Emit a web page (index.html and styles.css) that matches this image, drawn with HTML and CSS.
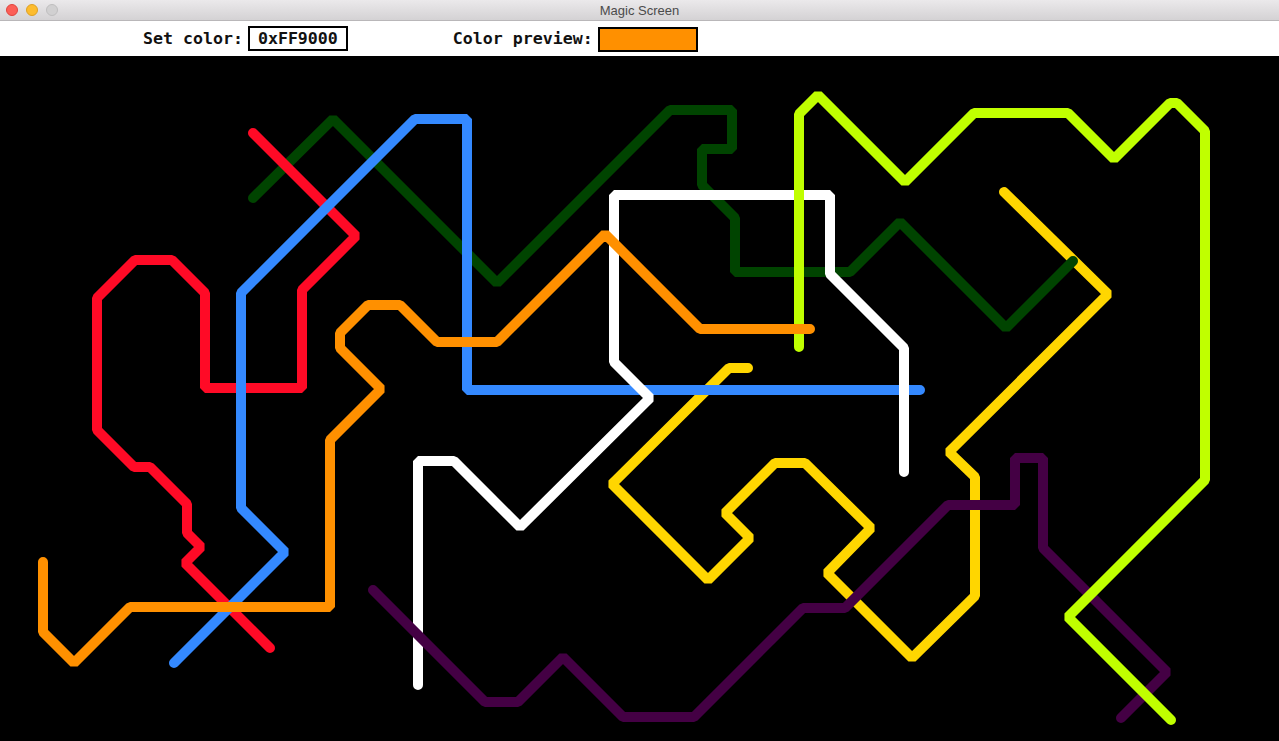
FILE: index.html
```html
<!DOCTYPE html>
<html>
<head>
<meta charset="utf-8">
<title>Magic Screen</title>
<link rel="stylesheet" href="styles.css">
</head>
<body>
<div class="window">
  <div class="titlebar">
    <div class="lights">
      <span class="light close"></span>
      <span class="light min"></span>
      <span class="light zoom"></span>
    </div>
    <div class="title">Magic Screen</div>
    <div></div>
  </div>
  <div class="toolbar">
    <div class="field">
      <span class="label">Set color:</span>
      <span class="input">0xFF9000</span>
    </div>
    <div class="field preview">
      <span class="label">Color preview:</span>
      <span class="swatch"></span>
    </div>
  </div>
  <div class="canvas">
    <svg class="board" width="1279" height="685" viewBox="0 56 1279 685" xmlns="http://www.w3.org/2000/svg">
      <polyline class="stroke yellow" points="748,368 729,368 612,484 708,580 750,538 725,513 775,463 805,463 871,528 827,573 912,658 975,596 975,477 949,452 1108,294 1004,192"/>
      <polyline class="stroke green" points="253,198 333,119 497,283 670,110 732,110 732,149 702,149 702,185 735,218 735,272 850,272 900,222 1006,328 1073,261"/>
      <polyline class="stroke red" points="253,133 356,236 302,290 302,388 205,388 205,293 172,260 135,260 97,298 97,430 134,467 150,467 187,504 187,533 201,547 185,563 270,648"/>
      <polyline class="stroke blue" points="174,663 285,552 241,508 241,293 415,119 467,119 467,390 920,390"/>
      <polyline class="stroke white" points="418,685 418,461 454,461 520,527 650,398 614,362 614,195 830,195 830,274 904,348 904,472"/>
      <polyline class="stroke purple" points="373,590 485,702 518,702 563,657 623,717 694,717 803,608 845,608 948,505 1015,505 1015,458 1043,458 1043,548 1167,672 1121,718"/>
      <polyline class="stroke lime" points="799,347 799,114 818,95 905,182 974,113 1068,113 1114,159 1170,103 1177,103 1205,131 1205,480 1068,617 1171,720"/>
      <polyline class="stroke orange" points="43,562 43,632 74,663 130,607 330,607 330,440 381,389 340,348 340,333 368,305 400,305 437,342 497,342 605,234 700,329 810,329"/>
    </svg>
  </div>
</div>
</body>
</html>
```
FILE: styles.css
```css
* { box-sizing: border-box; }

html, body {
  margin: 0;
  padding: 0;
  background: #000;
  overflow: hidden;
}

.window {
  width: 1279px;
  height: 741px;
  display: flex;
  flex-direction: column;
}

.titlebar {
  height: 21px;
  display: grid;
  grid-template-columns: 1fr auto 1fr;
  align-items: center;
  background: linear-gradient(#ebe9eb, #d4d2d4);
  border-bottom: 1px solid #b9b7b9;
}

.lights {
  display: flex;
  gap: 8px;
  padding-left: 6px;
}

.light {
  width: 12px;
  height: 12px;
  border-radius: 50%;
  display: block;
}

.close { background: #fc5f57; border: 1px solid #e0443e; }
.min { background: #fdbc2e; border: 1px solid #dea123; }
.zoom { background: #d1d0d1; border: 1px solid #bfbebf; }

.title {
  font-family: "Liberation Sans", Arial, sans-serif;
  font-size: 13px;
  color: #4b4b4b;
}

.toolbar {
  height: 35px;
  background: #fff;
  display: flex;
  align-items: center;
  padding-left: 143px;
  gap: 105px;
  font-family: "DejaVu Sans Mono", "Liberation Mono", monospace;
  font-weight: bold;
  font-size: 16.6px;
  color: #111;
}

.field {
  display: flex;
  align-items: center;
  gap: 5px;
}

.input {
  display: block;
  height: 25px;
  line-height: 21px;
  padding: 0 8px;
  border: 2px solid #000;
  margin-top: -1px;
}

.swatch {
  display: block;
  width: 100px;
  height: 25px;
  background: #ff9000;
  border: 2px solid #000;
  margin-top: 1px;
}

.canvas {
  flex: 1;
  background: #000;
}

.board { display: block; }

.stroke {
  fill: none;
  stroke-width: 10;
  stroke-linejoin: bevel;
  stroke-linecap: round;
}

.yellow { stroke: #ffd600; }
.green { stroke: #004400; }
.red { stroke: #ff0a26; }
.blue { stroke: #3489ff; }
.white { stroke: #ffffff; }
.purple { stroke: #440044; }
.lime { stroke: #c0ff00; }
.orange { stroke: #ff9000; }
```
